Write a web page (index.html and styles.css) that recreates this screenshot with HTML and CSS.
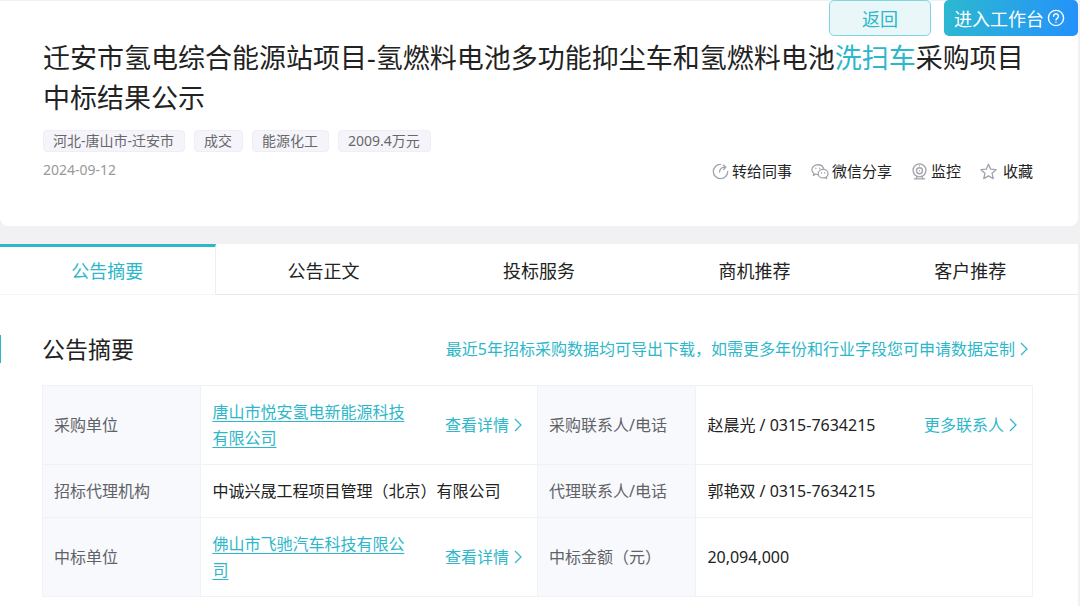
FILE: index.html
```html
<!DOCTYPE html>
<html lang="zh-CN">
<head>
    <meta charset="UTF-8">
    <meta name="viewport" content="width=device-width, initial-scale=1.0">
    <title>中标结果公示</title>
    <link rel="stylesheet" href="styles.css">
</head>
<body>
    <header class="card">
        <div class="top-bar">
            <button type="button" class="btn btn-back">返回</button>
            <button type="button" class="btn btn-work">进入工作台
                <svg class="help" viewBox="0 0 18 18" fill="none" stroke="currentColor" stroke-width="1.4" stroke-linecap="round">
                    <circle cx="9" cy="9" r="7.6"/>
                    <path d="M6.6 7.2a2.4 2.4 0 1 1 3.6 2.1c-.8.5-1.2.8-1.2 1.7M9 13.1v.2"/>
                </svg>
            </button>
        </div>
        <div class="card-body">
            <h1>迁安市氢电综合能源站项目-氢燃料电池多功能抑尘车和氢燃料电池<em>洗扫车</em>采购项目中标结果公示</h1>
            <ul class="tags">
                <li>河北-唐山市-迁安市</li>
                <li>成交</li>
                <li>能源化工</li>
                <li>2009.4万元</li>
            </ul>
            <div class="meta">
                <time datetime="2024-09-12">2024-09-12</time>
                <div class="actions">
                    <button type="button">
                        <svg viewBox="0 0 18 18">
                            <path d="M9 1.4A7.6 7.6 0 1 0 16.6 9"/>
                            <path d="M8 9.6c.2-3.2 2.2-5.2 6-5.2M12 2.2l2.7 2.2-2.4 2.5"/>
                        </svg>转给同事
                    </button>
                    <button type="button">
                        <svg class="wide" viewBox="0 0 20 18">
                            <path d="M7.4 12.4c-.9 0-1.6-.1-2.4-.4l-2.3 1.3.6-2.2C1.900 10.100 1 8.600 1 7c0-3.100 3-5.500 6.600-5.500 3.200 0 5.800 1.800 6.400 4.300"/>
                            <path d="M19 11.400c0-2.600-2.500-4.700-5.500-4.700S8 8.800 8 11.400s2.500 4.700 5.500 4.700c.7 0 1.400-.1 2-.3l1.900 1-.5-1.800c1.300-.9 2.100-2.200 2.100-3.600z"/>
                            <path d="M5.400 5.300v.5M9.700 5.300v.5M11.700 10.200v.5M15.300 10.200v.5"/>
                        </svg>微信分享
                    </button>
                    <button type="button">
                        <svg viewBox="0 0 18 18">
                            <circle cx="9" cy="7.8" r="6.8"/>
                            <circle cx="9" cy="8.2" r="3.2"/>
                            <path d="M9 2.8v.2M9 8.100v.2M6.500 14.200l-1 2.200M11.500 14.200l1 2.200M3.500 16.800h11"/>
                        </svg>监控
                    </button>
                    <button type="button" class="favorite">
                        <svg viewBox="0 0 18 18">
                            <path d="M9 1.300l2.300 5.200 5.700.6-4.200 3.800 1.200 5.700L9 13.700l-5 2.900 1.200-5.700L1 7.100l5.700-.6z"/>
                        </svg>收藏
                    </button>
                </div>
            </div>
        </div>
    </header>

    <main>
        <nav class="tabs">
            <a href="#summary" class="active">公告摘要</a>
            <a href="#content">公告正文</a>
            <a href="#service">投标服务</a>
            <a href="#chance">商机推荐</a>
            <a href="#customer">客户推荐</a>
        </nav>

        <section id="summary">
            <div class="section-head">
                <h2>公告摘要</h2>
                <a href="#export">最近5年招标采购数据均可导出下载，如需更多年份和行业字段您可申请数据定制<svg class="arrow" viewBox="0 0 8 14"><path d="M1 1l6 6-6 6"/></svg></a>
            </div>
            <table>
                <tbody>
                    <tr>
                        <th scope="row">采购单位</th>
                        <td>
                            <div class="cell">
                                <a href="#buyer" class="company">唐山市悦安氢电新能源科技有限公司</a>
                                <a href="#buyer-detail" class="more">查看详情<svg class="arrow" viewBox="0 0 8 14"><path d="M1 1l6 6-6 6"/></svg></a>
                            </div>
                        </td>
                        <th scope="row">采购联系人/电话</th>
                        <td>
                            <div class="cell">
                                <span>赵晨光 / 0315-7634215</span>
                                <a href="#contacts" class="more">更多联系人<svg class="arrow" viewBox="0 0 8 14"><path d="M1 1l6 6-6 6"/></svg></a>
                            </div>
                        </td>
                    </tr>
                    <tr>
                        <th scope="row">招标代理机构</th>
                        <td>中诚兴晟工程项目管理（北京）有限公司</td>
                        <th scope="row">代理联系人/电话</th>
                        <td>郭艳双 / 0315-7634215</td>
                    </tr>
                    <tr>
                        <th scope="row">中标单位</th>
                        <td>
                            <div class="cell">
                                <a href="#winner" class="company">佛山市飞驰汽车科技有限公司</a>
                                <a href="#winner-detail" class="more">查看详情<svg class="arrow" viewBox="0 0 8 14"><path d="M1 1l6 6-6 6"/></svg></a>
                            </div>
                        </td>
                        <th scope="row">中标金额（元）</th>
                        <td>20,094,000</td>
                    </tr>
                </tbody>
            </table>
        </section>
    </main>
</body>
</html>
```
FILE: styles.css
```css
* {
    box-sizing: border-box;
    margin: 0;
    padding: 0;
}

body {
    padding-right: 2px;
    background-color: #f1f1f3;
    color: #222;
    font-family: "Noto Sans", "Noto Sans CJK SC", sans-serif;
    font-size: 16px;
    line-height: 26px;
}

a {
    color: #2cb7ca;
    text-decoration: none;
}

button {
    font-family: inherit;
    cursor: pointer;
}

svg {
    flex: none;
}

/* Title card */
.card {
    margin-bottom: 18px;
    background-color: #fff;
    box-shadow: inset 0 1px #f1f1f3;
    border-radius: 0 0 8px 8px;
}

.top-bar {
    display: flex;
    justify-content: flex-end;
    gap: 13px;
}

.btn {
    display: flex;
    align-items: center;
    justify-content: center;
    height: 36px;
    border-radius: 5px;
    font-size: 18px;
}

.btn-back {
    width: 102px;
    background-color: #eaf7f9;
    border: 1px solid #80d5df;
    color: #2cb7ca;
}

.btn-work {
    gap: 3px;
    width: 134px;
    padding-right: 3px;
    background: linear-gradient(100deg, #2cb9cf, #2491fc);
    border: none;
    color: #fff;
}

.help {
    width: 18px;
    height: 18px;
}

.card-body {
    padding: 2px 45px 42px 43px;
}

h1 {
    font-size: 27px;
    font-weight: 400;
    line-height: 40px;
}

h1 em {
    color: #2cb7ca;
    font-style: normal;
}

.tags {
    display: flex;
    gap: 9px;
    margin-top: 12px;
    list-style: none;
}

.tags li {
    padding: 0 10px 0 9px;
    background-color: #f5f4fb;
    border: 1px solid #efeef6;
    border-radius: 4px;
    color: #686868;
    font-size: 14px;
    line-height: 20px;
}

.meta {
    display: flex;
    justify-content: space-between;
    height: 32px;
}

time {
    padding-top: 5px;
    color: #999;
    font-size: 14px;
}

.actions {
    display: flex;
    align-items: flex-end;
    gap: 19px;
}

.actions button {
    display: flex;
    align-items: center;
    gap: 3px;
    background: none;
    border: none;
    color: #222;
    font-size: 15px;
    line-height: 26px;
}

.actions .favorite {
    gap: 6px;
}

.actions svg {
    width: 17px;
    height: 17px;
    fill: none;
    stroke: #a3a4ad;
    stroke-width: 1.4;
    stroke-linecap: round;
    stroke-linejoin: round;
}

.actions .wide {
    width: 18px;
}

/* Tabs */
main {
    min-height: 362px;
    background-color: #fff;
}

.tabs {
    display: grid;
    grid-template-columns: repeat(5, 1fr);
}

.tabs a {
    padding: 4px 0 3px;
    border-top: 3px solid transparent;
    border-bottom: 1px solid #e8e8ea;
    color: #222;
    font-size: 18px;
    line-height: 40px;
    text-align: center;
}

.tabs .active {
    border-top-color: #2cb7ca;
    border-right: 1px solid #eeeef0;
    border-bottom-color: #f5f5f6;
    color: #2cb7ca;
}

/* Summary */
.section-head {
    display: flex;
    align-items: center;
    justify-content: space-between;
    margin: 40px 0 22px;
    padding: 0 50px 0 41px;
    border-left: 1px solid #2cb7ca;
}

h2 {
    font-size: 23px;
    font-weight: 400;
    line-height: 28px;
}

.arrow {
    width: 8px;
    height: 14px;
    margin-left: 5px;
    fill: none;
    stroke: currentColor;
    stroke-width: 1.2;
}

.section-head a,
.more {
    display: flex;
    align-items: center;
    white-space: nowrap;
}

table {
    width: calc(100% - 87px);
    margin: 0 45px 9px 42px;
    border-collapse: collapse;
    table-layout: fixed;
}

th,
td {
    padding: 13px 15px 13px 11px;
    border: 1px solid #f0f2f7;
    text-align: left;
}

th {
    width: 16%;
    background-color: #f8f9fd;
    color: #606266;
    font-weight: 400;
}

td {
    width: 34%;
}

.cell {
    display: flex;
    align-items: center;
    justify-content: space-between;
    gap: 32px;
}

.company {
    text-decoration: underline;
    text-underline-offset: 3px;
}
```
